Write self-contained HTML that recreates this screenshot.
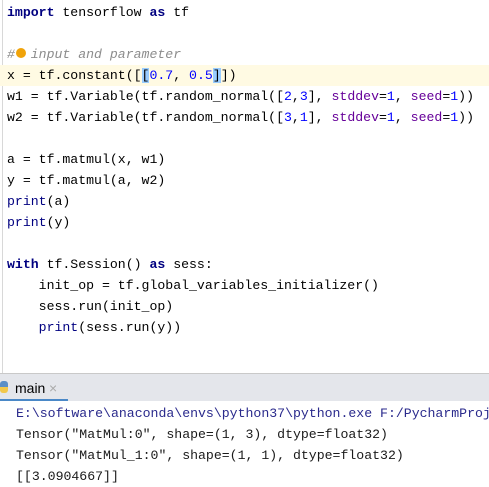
<!DOCTYPE html><html><head><style>
body{margin:0;width:489px;height:487px;overflow:hidden;background:#fff;font-family:"Liberation Mono",monospace;font-size:13.2px;position:relative}
.l{position:absolute;left:7px;height:21px;line-height:21px;white-space:pre;color:#000}
.k{color:#000080;font-weight:bold}.n{color:#0000ff}.p{color:#660099}.b{color:#000080}.c{color:#8c8c8c;font-style:italic}
.br{background:#99ccff}
.o{position:absolute;left:16px;height:21px;line-height:21px;white-space:pre;color:#1a1a1a}
</style></head><body>
<div style="position:absolute;left:2px;top:0;width:1px;height:374px;background:#d8d8d8"></div>
<div style="position:absolute;left:0;top:65px;width:489px;height:21px;background:#fffae3"></div>
<div class="l" style="top:2px"><span class="k">import</span> tensorflow <span class="k">as</span> tf</div>
<div class="l" style="top:44px"><span class="c">#  input and parameter</span></div>
<div style="position:absolute;left:16px;top:48px;width:10px;height:10px;border-radius:50%;background:#f0a30a"></div>
<div class="l" style="top:65px">x = tf.constant([<span class="br">[</span><span class="n">0.7</span>, <span class="n">0.5</span><span class="br">]</span>])</div>
<div class="l" style="top:86px">w1 = tf.Variable(tf.random_normal([<span class="n">2</span>,<span class="n">3</span>], <span class="p">stddev</span>=<span class="n">1</span>, <span class="p">seed</span>=<span class="n">1</span>))</div>
<div class="l" style="top:107px">w2 = tf.Variable(tf.random_normal([<span class="n">3</span>,<span class="n">1</span>], <span class="p">stddev</span>=<span class="n">1</span>, <span class="p">seed</span>=<span class="n">1</span>))</div>
<div class="l" style="top:149px">a = tf.matmul(x, w1)</div>
<div class="l" style="top:170px">y = tf.matmul(a, w2)</div>
<div class="l" style="top:191px"><span class="b">print</span>(a)</div>
<div class="l" style="top:212px"><span class="b">print</span>(y)</div>
<div class="l" style="top:254px"><span class="k">with</span> tf.Session() <span class="k">as</span> sess:</div>
<div class="l" style="top:275px">    init_op = tf.global_variables_initializer()</div>
<div class="l" style="top:296px">    sess.run(init_op)</div>
<div class="l" style="top:317px">    <span class="b">print</span>(sess.run(y))</div>
<div style="position:absolute;left:0;top:373px;width:489px;height:1px;background:#c9c9c9"></div>
<div style="position:absolute;left:0;top:374px;width:489px;height:27px;background:#e4e6eb"></div>
<div style="position:absolute;left:0;top:399px;width:68px;height:2px;background:#4a88c7"></div>
<div style="position:absolute;left:0;top:381px;width:8px;height:12px;background:linear-gradient(#5a8fc8 50%,#f2c84b 50%);border-radius:3px"></div>
<div style="position:absolute;left:15px;top:378px;font-family:'Liberation Sans',sans-serif;font-size:14px;line-height:20px;color:#000">main</div>
<div style="position:absolute;left:49px;top:378px;font-family:'Liberation Sans',sans-serif;font-size:14px;line-height:20px;color:#aaa">×</div>
<div class="o" style="top:403px;color:#2a2a8c">E:\software\anaconda\envs\python37\python.exe F:/PycharmProj</div>
<div class="o" style="top:424px">Tensor("MatMul:0", shape=(1, 3), dtype=float32)</div>
<div class="o" style="top:445px">Tensor("MatMul_1:0", shape=(1, 1), dtype=float32)</div>
<div class="o" style="top:466px">[[3.0904667]]</div>
</body></html>
